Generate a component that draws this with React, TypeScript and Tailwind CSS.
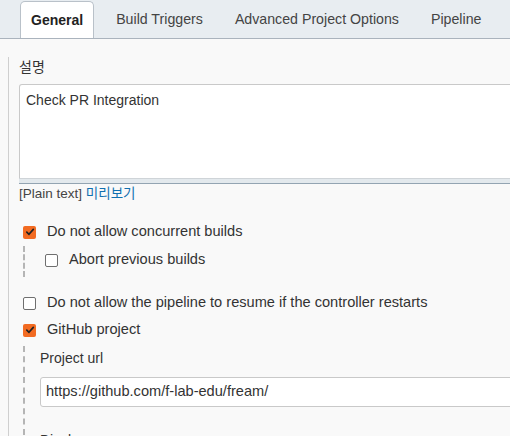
const Checkbox = ({ checked }: { checked?: boolean }) =>
  checked ? (
    <span className="flex h-[13px] w-[13px] shrink-0 items-center justify-center rounded-[2px] bg-[#f26b22]">
      <svg width="10" height="10" viewBox="0 0 10 10" fill="none">
        <path d="M1.8 5.2 L4 7.3 L8.3 2.4" stroke="#222" strokeWidth="1.7" strokeLinecap="round" strokeLinejoin="round" />
      </svg>
    </span>
  ) : (
    <span className="h-[13px] w-[13px] shrink-0 rounded-[2px] border border-[#6f6f6f] bg-white" />
  );

const Row = ({ checked, label }: { checked?: boolean; label: string }) => (
  <div className="flex h-5 items-center gap-[11px]">
    <Checkbox checked={checked} />
    <span className="text-[14.6px]">{label}</span>
  </div>
);

const tabs = ["General", "Build Triggers", "Advanced Project Options", "Pipeline"];

export default function App() {
  return (
    <div
      className="h-[436px] w-[510px] overflow-hidden bg-[#f9f9f9] text-[14px] text-[#333]"
      style={{ fontFamily: '"Liberation Sans", "Noto Sans CJK KR", sans-serif' }}
    >
      <div className="flex h-[39px] items-end border-b border-[#aab3bd] bg-[#e8edf1] pl-5">
        {tabs.map((t, i) => (
          <div
            key={t}
            className={
              i === 0
                ? "mr-[11px] flex h-[37px] items-center rounded-t-[5px] border border-b-0 border-[#b9c1c9] bg-white px-[10px] font-bold text-[#222]"
                : "mr-[10px] flex h-[37px] items-center px-[11px] text-[14.2px] text-[#444]"
            }
          >
            {t}
          </div>
        ))}
      </div>

      <div className="ml-[8px] h-full border-l border-[#cfcfcf] pl-[10px]">
        <div className="mt-[18px] leading-5">설명</div>
        <div className="mt-[7px] w-[500px]">
          <div className="h-[94px] rounded-tl-[3px] border border-b-0 border-[#c9c9c9] bg-white px-[6px] pt-[5px] leading-5">
            Check PR Integration
          </div>
          <div className="h-[6px] border-y border-t-[#cfd4d8] border-b-[#93a4b2] bg-[#e3e9ed]" />
        </div>
        <div className="mt-[1px] text-[13.5px] leading-[18px] text-[#444]">
          [Plain text] <span className="text-[#1170b0]">미리보기</span>
        </div>

        <div className="ml-[4px] mt-[19px]">
          <Row checked label="Do not allow concurrent builds" />
          <div className="mt-[4px] border-l-2 border-dashed border-[#b5b5b5] pb-[7px] pl-[20px] pt-[4px]">
            <Row label="Abort previous builds" />
          </div>
          <div className="mt-[16px]">
            <Row label="Do not allow the pipeline to resume if the controller restarts" />
          </div>
          <div className="mt-[7px]">
            <Row checked label="GitHub project" />
          </div>
          <div className="mt-[6px] h-[120px] border-l-2 border-dashed border-[#b5b5b5] pl-[15px] pt-[2px]">
            <div className="leading-5">Project url</div>
            <div className="mt-[9px] flex h-[30px] w-[480px] items-center rounded-l-[3px] border border-[#c9c9c9] bg-white px-[5px] text-[14.6px]">
              https://github.com/f-lab-edu/fream/
            </div>
            <div className="mt-[23px] leading-5">Display name</div>
          </div>
        </div>
      </div>
    </div>
  );
}
